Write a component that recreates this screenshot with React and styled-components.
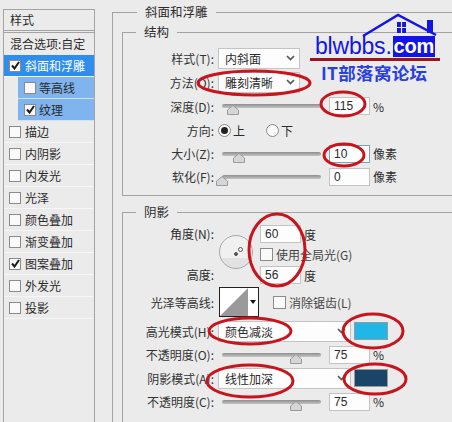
import React from "react";
import styled, { createGlobalStyle } from "styled-components";

const GlobalStyle = createGlobalStyle`
  html, body { margin: 0; padding: 0; }
  body {
    width: 452px;
    height: 422px;
    overflow: hidden;
    background: #ebebeb;
    font-family: "Noto Sans CJK SC", "Liberation Sans", sans-serif;
    font-size: 12px;
    color: #2b2b2b;
  }
`;

const Page = styled.div`
  position: relative;
  width: 452px;
  height: 422px;
  display: flex;
  overflow: hidden;
`;

const Sidebar = styled.div`
  width: 90px;
  height: 413px;
  margin: 9px 0 0 3px;
  border: 1px solid #a3a3a3;
  border-bottom: none;
  flex-shrink: 0;
`;

const SideTitle = styled.div`
  height: 20px;
  line-height: 20px;
  padding-left: 6px;
  border-bottom: 1px solid #a3a3a3;
  margin-bottom: 1px;
`;

const SideBlend = styled.div`
  height: 22px;
  line-height: 21px;
  padding-left: 6px;
  border-top: 1px solid #a3a3a3;
`;

const SideItem = styled.div`
  height: 22px;
  box-sizing: border-box;
  display: flex;
  align-items: center;
  gap: ${p => (p.$sub ? 3 : 4)}px;
  padding-left: ${p => (p.$sub ? 6 : 5)}px;
  margin-left: ${p => (p.$sub ? 14 : 0)}px;
  border-bottom: 1px solid ${p => (p.$tone === "sub" ? "#cfe1f5" : "#f6f6f6")};
  background: ${p => (p.$tone === "active" ? "#2f8df0" : p.$tone === "sub" ? "#7fb4ee" : "transparent")};
  color: ${p => (p.$tone === "active" ? "#fff" : "#2b2b2b")};
`;

const Check = styled.span`
  width: ${p => p.$size || 12}px;
  height: ${p => p.$size || 12}px;
  box-sizing: border-box;
  flex-shrink: 0;
  border: 1px solid #8a8a8a;
  background: #fafafa;
  display: inline-flex;
  align-items: center;
  justify-content: center;
`;

const Main = styled.div`
  margin-left: 17px;
  width: 380px;
  flex-shrink: 0;
`;

const Outer = styled.fieldset`
  margin: 3px 0 0;
  padding: 0 0 0 9px;
  height: 440px;
  width: 380px;
  box-sizing: border-box;
  border: 1px solid #a3a3a3;
  min-width: 0;
`;

const Legend = styled.legend`
  margin-left: 15px;
  padding: 0 8px;
  height: 18px;
  line-height: 18px;
  font-size: 12.5px;
`;

const Group = styled.fieldset`
  margin: ${p => p.$top}px 0 0;
  padding: ${p => p.$pad}px 0 0;
  height: ${p => p.$h}px;
  width: 370px;
  box-sizing: border-box;
  border: 1px solid #a3a3a3;
  min-width: 0;
`;

const GroupLegend = styled(Legend)`
  margin-left: 13px;
`;

const Row = styled.div`
  display: flex;
  align-items: center;
  height: ${p => p.$h}px;
`;

const Label = styled.div`
  width: 92px;
  box-sizing: border-box;
  padding-right: 1px;
  text-align: right;
  flex-shrink: 0;
  white-space: nowrap;
  color: #333;
`;

const Select = styled.div`
  margin-left: 3px;
  width: ${p => p.$w}px;
  height: 21px;
  box-sizing: border-box;
  border: 1px solid #c4c4c4;
  background: #fdfdfd;
  display: flex;
  align-items: center;
  justify-content: space-between;
  padding: 0 4px 0 6px;
  flex-shrink: 0;
`;

const Track = styled.div`
  position: relative;
  margin-left: 7px;
  width: 99px;
  height: 4px;
  border-radius: 2px;
  background: linear-gradient(#8e8e8e, #c4c4c4);
  flex-shrink: 0;
`;

const Thumb = styled.svg`
  position: absolute;
  left: ${p => p.$at}px;
  top: 1px;
`;

const Field = styled.div`
  margin-left: ${p => p.$ml}px;
  width: 41px;
  height: 18px;
  box-sizing: border-box;
  border: 1px solid ${p => (p.$focus ? "#7da2b8" : "#c4c4c4")};
  background: #fdfdfd;
  padding-left: 4px;
  line-height: 17px;
  font-family: "Liberation Sans", sans-serif;
  flex-shrink: 0;
`;

const Unit = styled.span`
  margin-left: 3px;
  white-space: nowrap;
`;

const Radio = styled.span`
  width: 13px;
  height: 13px;
  box-sizing: border-box;
  flex-shrink: 0;
  margin-left: ${p => p.$ml}px;
  border: 1px solid #8a8a8a;
  border-radius: 50%;
  background: #fafafa;
  display: inline-flex;
  align-items: center;
  justify-content: center;
  &::after {
    content: "";
    width: 7px;
    height: 7px;
    border-radius: 50%;
    background: ${p => (p.$on ? "#222" : "transparent")};
  }
`;

const RadioText = styled.span`
  margin-left: 2px;
`;

const AngleRow = styled.div`
  display: flex;
  height: 60px;
`;

const AngleLabels = styled.div`
  width: 92px;
  box-sizing: border-box;
  padding: 0 1px 1px 0;
  text-align: right;
  flex-shrink: 0;
  display: flex;
  flex-direction: column;
  justify-content: space-between;
  line-height: 18px;
`;

const Dial = styled.div`
  position: relative;
  width: 34px;
  height: 34px;
  margin: 10px 0 0 4px;
  box-sizing: border-box;
  border: 1px solid #a8a8a8;
  border-radius: 50%;
  background: linear-gradient(#f0f0f0 0 70%, #e2e2e2 70%);
  flex-shrink: 0;
`;

const DialDot = styled.span`
  position: absolute;
  width: ${p => p.$s}px;
  height: ${p => p.$s}px;
  left: ${p => p.$x}px;
  top: ${p => p.$y}px;
  border-radius: 50%;
  background: ${p => p.$c};
  border: 1px solid #555;
  box-sizing: border-box;
`;

const AngleFields = styled.div`
  margin-left: 7px;
  display: flex;
  flex-direction: column;
  justify-content: space-between;
  height: 59px;
`;

const FieldLine = styled.div`
  display: flex;
  align-items: center;
  height: 18px;
`;

const GrayText = styled.span`
  margin-left: 3px;
  color: #444;
  white-space: nowrap;
`;

const Contour = styled.div`
  display: flex;
  align-items: stretch;
  margin-left: 4px;
  width: 40px;
  height: 30px;
  box-sizing: border-box;
  border: 1px solid #222;
  background: #fff;
  flex-shrink: 0;
`;

const CheckGap = styled.span`
  margin-left: 14px;
  display: flex;
  align-items: center;
`;

const Swatch = styled.div`
  margin-left: 3px;
  width: 34px;
  height: 18px;
  box-sizing: border-box;
  border: 1px solid #9a9a9a;
  background: ${p => p.$c};
  flex-shrink: 0;
`;

const Marks = styled.svg`
  position: absolute;
  left: 0;
  top: 0;
  pointer-events: none;
`;

const Logo = styled.div`
  position: absolute;
  left: 310px;
  top: 14px;
  width: 130px;
`;

const LogoLine = styled.div`
  display: flex;
  align-items: center;
  margin-top: 22px;
  padding-left: 5px;
  height: 21px;
  font-family: "Liberation Sans", sans-serif;
  font-size: 23px;
  letter-spacing: -0.2px;
  color: #1414e6;
`;

const LogoCom = styled.span`
  margin-left: 1px;
  padding: 0 1px;
  background: #1414e6;
  color: #fff;
  font-weight: 700;
  font-size: 20px;
  line-height: 21px;
`;

const LogoRule = styled.div`
  height: 3px;
  margin-top: 1px;
  background: #9c1420;
`;

const LogoCaption = styled.div`
  margin-top: 1px;
  padding-left: 11px;
  font-size: 17.5px;
  font-weight: 700;
  line-height: 22px;
  letter-spacing: 0.3px;
  color: #2a3fe0;
  white-space: nowrap;
`;

const Tick = () => (
  <svg width="9" height="9" viewBox="0 0 9 9">
    <path d="M1 4.5 L3.5 7.5 L8 1" fill="none" stroke="#1a1a1a" strokeWidth="2" />
  </svg>
);

const Chevron = () => (
  <svg width="9" height="6" viewBox="0 0 9 6">
    <path d="M1 1 L4.5 4.5 L8 1" fill="none" stroke="#555" strokeWidth="1.6" />
  </svg>
);

const Slider = ({ at }) => (
  <Track>
    <Thumb $at={at} width="12" height="10" viewBox="0 0 12 10">
      <path d="M6 .5 L11.5 5 V9.5 H.5 V5 Z" fill="#d6d6d6" stroke="#9a9a9a" />
    </Thumb>
  </Track>
);

const sideItems = [
  { text: "斜面和浮雕", on: true, tone: "active" },
  { text: "等高线", tone: "sub", sub: true },
  { text: "纹理", on: true, tone: "sub", sub: true },
  { text: "描边" },
  { text: "内阴影" },
  { text: "内发光" },
  { text: "光泽" },
  { text: "颜色叠加" },
  { text: "渐变叠加" },
  { text: "图案叠加", on: true },
  { text: "外发光" },
  { text: "投影" },
];

const ellipses = [
  [254, 83, 56, 12],
  [343, 104, 22, 12],
  [344, 155, 20, 11],
  [277, 250, 28, 36],
  [250, 331, 41, 13],
  [373, 331, 30, 17],
  [250, 381, 43, 16],
  [375, 379, 31, 15],
];

export default function App() {
  return (
    <Page>
      <GlobalStyle />
      <Sidebar>
        <SideTitle>样式</SideTitle>
        <SideBlend>混合选项:自定</SideBlend>
        {sideItems.map(item => (
          <SideItem key={item.text} $tone={item.tone} $sub={item.sub}>
            <Check>{item.on && <Tick />}</Check>
            {item.text}
          </SideItem>
        ))}
      </Sidebar>

      <Main>
        <Outer>
          <Legend>斜面和浮雕</Legend>
          <Group $top={2} $pad={5} $h={173}>
            <GroupLegend>结构</GroupLegend>
            <Row $h={24}>
              <Label>样式(T):</Label>
              <Select $w={82}>内斜面<Chevron /></Select>
            </Row>
            <Row $h={24}>
              <Label>方法(Q):</Label>
              <Select $w={82}>雕刻清晰<Chevron /></Select>
            </Row>
            <Row $h={24}>
              <Label>深度(D):</Label>
              <Slider at={5} />
              <Field $ml={8}>115</Field>
              <Unit>%</Unit>
            </Row>
            <Row $h={24}>
              <Label>方向:</Label>
              <Radio $ml={3} $on />
              <RadioText>上</RadioText>
              <Radio $ml={21} />
              <RadioText>下</RadioText>
            </Row>
            <Row $h={23}>
              <Label>大小(Z):</Label>
              <Slider at={11} />
              <Field $ml={8} $focus>10</Field>
              <Unit>像素</Unit>
            </Row>
            <Row $h={23}>
              <Label>软化(F):</Label>
              <Slider at={-6} />
              <Field $ml={8}>0</Field>
              <Unit>像素</Unit>
            </Row>
          </Group>

          <Group $top={7} $pad={4} $h={230}>
            <GroupLegend>阴影</GroupLegend>
            <AngleRow>
              <AngleLabels>
                <div>角度(N):</div>
                <div>高度:</div>
              </AngleLabels>
              <Dial>
                <DialDot $s={4} $x={14} $y={16} $c="#555" />
                <DialDot $s={5} $x={18} $y={11} $c="#fff" />
              </Dial>
              <AngleFields>
                <FieldLine>
                  <Field $ml={0}>60</Field>
                  <Unit>度</Unit>
                </FieldLine>
                <FieldLine>
                  <Check $size={13} />
                  <GrayText>使用全局光(G)</GrayText>
                </FieldLine>
                <FieldLine>
                  <Field $ml={0}>56</Field>
                  <Unit>度</Unit>
                </FieldLine>
              </AngleFields>
            </AngleRow>
            <Row $h={34}>
              <Label>光泽等高线:</Label>
              <Contour>
                <svg width="38" height="28" viewBox="0 0 38 28">
                  <path d="M0 28 L28 0 V28 Z" fill="#9a9a9a" />
                  <path d="M30 12 H36 L33 16 Z" fill="#111" />
                </svg>
              </Contour>
              <CheckGap>
                <Check $size={13} />
                <GrayText>消除锯齿(L)</GrayText>
              </CheckGap>
            </Row>
            <Row $h={24}>
              <Label>高光模式(H):</Label>
              <Select $w={133}>颜色减淡<Chevron /></Select>
              <Swatch $c="#1fb6e8" />
            </Row>
            <Row $h={23}>
              <Label>不透明度(O):</Label>
              <Slider at={68} />
              <Field $ml={8}>75</Field>
              <Unit>%</Unit>
            </Row>
            <Row $h={24}>
              <Label>阴影模式(A):</Label>
              <Select $w={133}>线性加深<Chevron /></Select>
              <Swatch $c="#1b4566" />
            </Row>
            <Row $h={23}>
              <Label>不透明度(C):</Label>
              <Slider at={68} />
              <Field $ml={8}>75</Field>
              <Unit>%</Unit>
            </Row>
          </Group>
        </Outer>
      </Main>

      <Marks width="452" height="422" viewBox="0 0 452 422">
        {ellipses.map(([cx, cy, rx, ry]) => (
          <ellipse key={`${cx}-${cy}`} cx={cx} cy={cy} rx={rx} ry={ry} fill="none" stroke="#c8141c" strokeWidth="3" />
        ))}
        <path d="M363 36 L398 15 L436 35" fill="none" stroke="#1414e6" strokeWidth="2.5" />
        <path d="M427 20 H433 V33 H427 Z" fill="#1414e6" />
        <path d="M397 22 H406 V33 H397 Z" fill="#1414e6" />
        <path d="M397 27.5 H406 M401.5 22 V33" stroke="#ebebeb" strokeWidth="1.2" />
      </Marks>

      <Logo>
        <LogoLine>blwbbs.<LogoCom>com</LogoCom></LogoLine>
        <LogoRule />
        <LogoCaption>IT部落窝论坛</LogoCaption>
      </Logo>
    </Page>
  );
}
